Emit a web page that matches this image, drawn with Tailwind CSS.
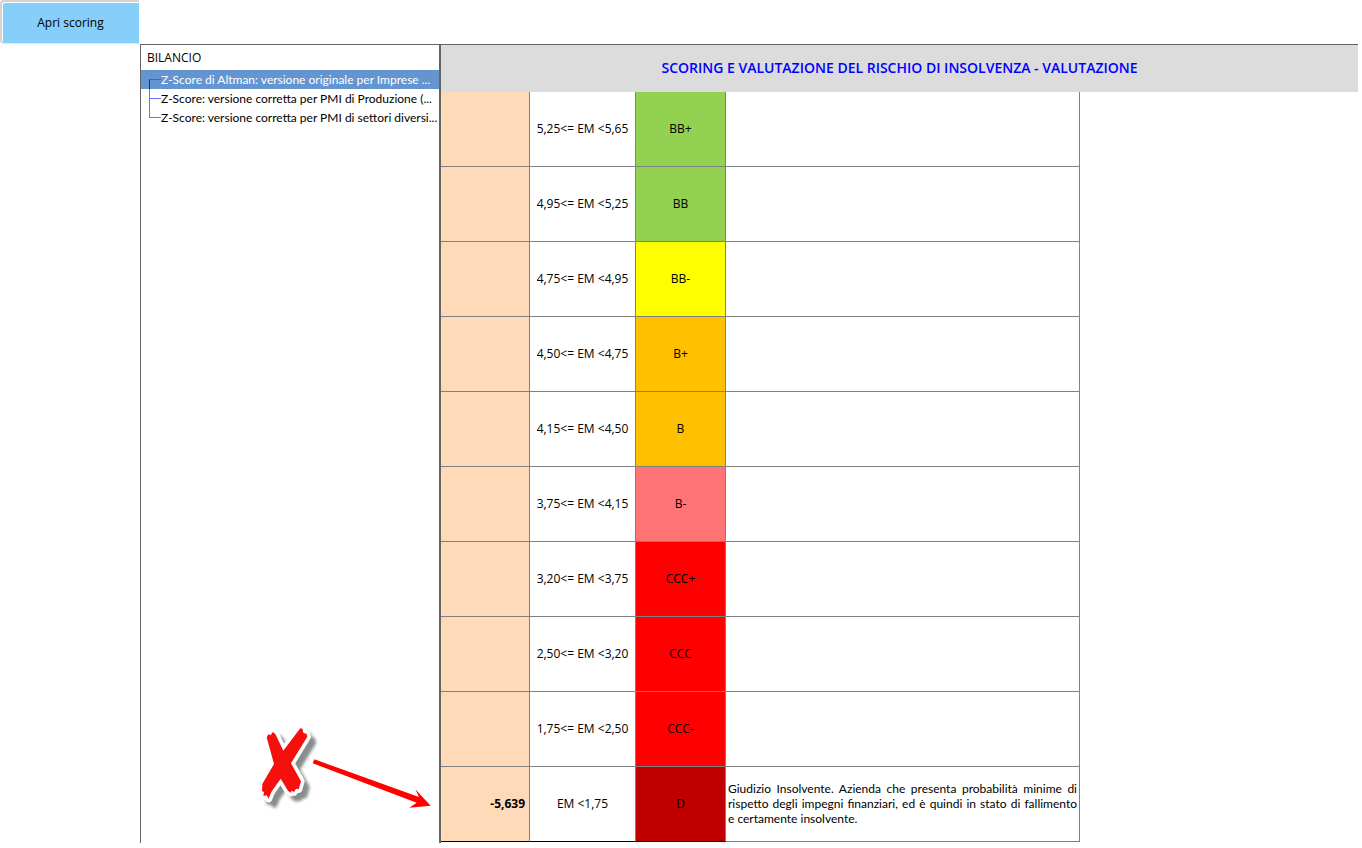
<!DOCTYPE html>
<html lang="it">
<head>
<meta charset="utf-8">
<meta name="viewport" content="width=device-width, initial-scale=1">
<title>Scoring e valutazione del rischio di insolvenza</title>
<script src="https://cdn.jsdelivr.net/npm/@tailwindcss/browser@4"></script>
</head>
<body class="min-h-screen bg-white font-[Lato,'Open_Sans',sans-serif] text-xs text-black">
<div class="flex pr-1">
  <div class="w-[140px] shrink-0 pr-px">
    <button type="button" class="block h-11 w-full rounded-l border-t-2 border-b border-l-2 border-t-[#d4d4d4] border-b-[#e6e6e6] border-l-[#d4d4d4] bg-[#87cefa] text-center font-['Open_Sans',sans-serif] shadow-[inset_1px_1px_0_#fff]">Apri scoring</button>
  </div>
  <main class="mt-11 flex min-w-0 grow">
    <nav class="relative w-[299px] shrink-0 border-t border-l border-[#646464]" aria-label="Bilancio">
      <h2 class="flex h-[25px] items-center pl-1.5 font-['Open_Sans',sans-serif]">BILANCIO</h2>
      <ul class="leading-[19px]">
        <li class="flex bg-[#6495d0] text-white">
          <span class="flex w-5 shrink-0 justify-end"><span class="mt-[9px] w-3 border-t border-l border-t-[#4060e0] border-l-[#2020c0]"></span></span>
          <a href="#originale" class="whitespace-nowrap">Z-Score di Altman: versione originale per Imprese ...</a>
        </li>
        <li class="flex">
          <span class="flex w-5 shrink-0 justify-end"><span class="w-3 border-l border-[#7070ff]"><span class="mt-[9px] block border-t border-[#7070ff]"></span></span></span>
          <a href="#pmi-produzione" class="whitespace-nowrap">Z-Score: versione corretta per PMI di Produzione (...</a>
        </li>
        <li class="flex">
          <span class="flex w-5 shrink-0 justify-end"><span class="h-[10px] w-3 border-b border-l border-[#7070ff]"></span></span>
          <a href="#pmi-diversi" class="whitespace-nowrap">Z-Score: versione corretta per PMI di settori diversi...</a>
        </li>
      </ul>
      <!-- Red cross with an arrow pointing at the company's score -->
      <svg class="absolute right-[5px] bottom-[25px]" width="178" height="96" viewBox="0 0 178 96" role="img" aria-label="Esito negativo">
        <defs>
          <filter id="soft" x="-20%" y="-20%" width="150%" height="150%"><feGaussianBlur stdDeviation="5"/></filter>
          <path id="cross" d="M80 82 86 72 92 76 98 66 106 72 130 122 175 62 182 54 188 58 190 68 200 72 202 80 153 160 183 214 176 238 168 236 162 246 155 242 152 248 144 242 122 206 94 246 86 266 80 256 70 258 72 246 66 243 67 222 102 162Z"/>
        </defs>
        <g transform="translate(-16 -12) scale(.33333)">
          <use href="#cross" transform="translate(17 18)" fill="#727a76" stroke="#727a76" stroke-width="18" stroke-linejoin="round" filter="url(#soft)" opacity=".85"/>
          <use href="#cross" fill="#fff" stroke="#fff" stroke-width="22" stroke-linejoin="round"/>
          <use href="#cross" fill="#f5100d"/>
          <path d="M223 148 537 261 526 238 572 287 508 293 530 278 218 160Z" fill="#f00"/>
        </g>
      </svg>
    </nav>
    <section class="min-w-0 grow border-l-2 border-[#646464] pb-px">
      <h1 class="flex h-12 items-center justify-center border-t border-[#646464] bg-[#dcdcdc] pb-0.5 font-['Open_Sans','Noto_Sans',sans-serif] text-sm font-semibold text-[#0000ff]">SCORING E VALUTAZIONE DEL RISCHIO DI INSOLVENZA - VALUTAZIONE</h1>
      <table class="w-[639px] table-fixed border-separate border-spacing-0 text-center font-['Open_Sans',sans-serif] [&_td]:h-[75px] [&_td]:border-r [&_td]:border-b [&_td]:border-[#808080] [&_td]:p-0">
        <colgroup><col class="w-[89px]"><col class="w-[106px]"><col class="w-[90px]"><col></colgroup>
        <tbody>
          <tr><td class="bg-[#ffdab9]"></td><td>5,25&lt;= EM &lt;5,65</td><td class="bg-[#92d250]">BB+</td><td></td></tr>
          <tr><td class="bg-[#ffdab9]"></td><td>4,95&lt;= EM &lt;5,25</td><td class="bg-[#92d250]">BB</td><td></td></tr>
          <tr><td class="bg-[#ffdab9]"></td><td>4,75&lt;= EM &lt;4,95</td><td class="bg-[#ffff00]">BB-</td><td></td></tr>
          <tr><td class="bg-[#ffdab9]"></td><td>4,50&lt;= EM &lt;4,75</td><td class="bg-[#ffc000]">B+</td><td></td></tr>
          <tr><td class="bg-[#ffdab9]"></td><td>4,15&lt;= EM &lt;4,50</td><td class="bg-[#ffc000]">B</td><td></td></tr>
          <tr><td class="bg-[#ffdab9]"></td><td>3,75&lt;= EM &lt;4,15</td><td class="bg-[#ff7575]">B-</td><td></td></tr>
          <tr><td class="bg-[#ffdab9]"></td><td>3,20&lt;= EM &lt;3,75</td><td class="bg-[#ff0000]">CCC+</td><td></td></tr>
          <tr><td class="bg-[#ffdab9]"></td><td>2,50&lt;= EM &lt;3,20</td><td class="bg-[#ff0000]">CCC</td><td></td></tr>
          <tr><td class="bg-[#ffdab9]"></td><td>1,75&lt;= EM &lt;2,50</td><td class="bg-[#ff0000]">CCC-</td><td></td></tr>
          <tr>
            <td class="border-b-black! bg-[#ffdab9] pr-1! text-right font-bold">-5,639</td>
            <td class="border-b-black!">EM &lt;1,75</td>
            <td class="border-b-black! bg-[#c00000]">D</td>
            <td class="px-0.5! pb-0.5! text-justify font-[Lato,sans-serif] leading-[15px]">Giudizio Insolvente. Azienda che presenta probabilità minime di rispetto degli impegni finanziari, ed è quindi in stato di fallimento e&nbsp;certamente insolvente.</td>
          </tr>
        </tbody>
      </table>
    </section>
  </main>
</div>
</body>
</html>
